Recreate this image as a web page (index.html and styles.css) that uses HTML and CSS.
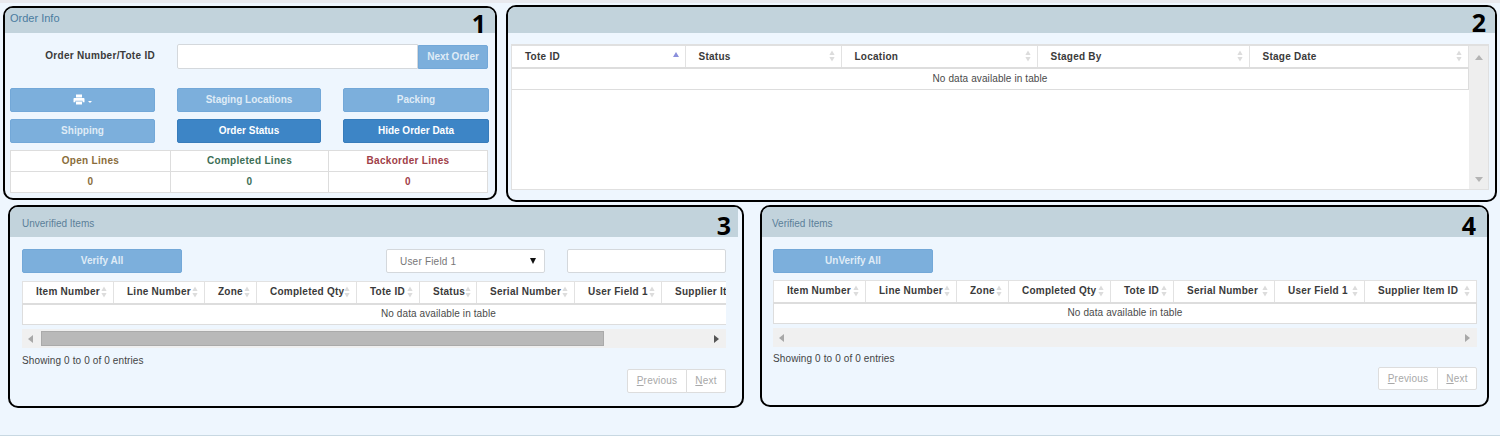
FILE: index.html
```html
<!DOCTYPE html>
<html lang="en">
<head>
    <meta charset="UTF-8">
    <meta name="viewport" content="width=device-width, initial-scale=1.0">
    <title>Order Info</title>
    <link rel="stylesheet" href="styles.css">
</head>
<body>
    <svg class="defs" width="0" height="0">
        <symbol id="sort" viewBox="0 0 6 12"><path d="M3 0.5 L5.6 5 H0.4 Z M3 11.5 L0.4 7 H5.6 Z"/></symbol>
    </svg>

    <div class="row row-top">
        <!-- Order Info -->
        <section class="panel panel-order">
            <span class="mark">1</span>
            <h2 class="panel-title title-large">Order Info</h2>
            <div class="order-body">
                <div class="order-form">
                    <label class="order-label" for="orderNumber">Order Number/Tote ID</label>
                    <input class="order-input" type="text" id="orderNumber">
                    <button class="btn btn-next" type="button">Next Order</button>
                </div>
                <div class="order-buttons">
                    <button class="btn" type="button">
                        <svg class="print-icon" viewBox="0 0 12 11" width="12" height="11"><path fill="#fff" d="M3 0.5 H9 V3.4 H3 Z M1.2 4 H10.8 Q11.5 4 11.5 5 V8.2 H9.6 V6.8 H2.4 V8.2 H0.5 V5 Q0.5 4 1.2 4 Z M3 7.5 H9 V10.5 H3 Z"/></svg>
                        <span class="caret"></span>
                    </button>
                    <button class="btn" type="button">Staging Locations</button>
                    <button class="btn" type="button">Packing</button>
                    <button class="btn" type="button">Shipping</button>
                    <button class="btn btn-active" type="button">Order Status</button>
                    <button class="btn btn-active" type="button">Hide Order Data</button>
                </div>
                <table class="stats">
                    <tr>
                        <th class="stat-open">Open Lines</th>
                        <th class="stat-done">Completed Lines</th>
                        <th class="stat-back">Backorder Lines</th>
                    </tr>
                    <tr>
                        <td class="stat-open">0</td>
                        <td class="stat-done">0</td>
                        <td class="stat-back">0</td>
                    </tr>
                </table>
            </div>
        </section>

        <!-- Tote table -->
        <section class="panel panel-totes">
            <span class="mark">2</span>
            <h2 class="panel-title title-large"></h2>
            <div class="totes-body">
                <div class="totes-box">
                    <div class="totes-main">
                        <table class="grid grid-totes">
                            <thead>
                                <tr>
                                    <th><div class="th-in">Tote ID <svg class="sort-up" viewBox="0 0 6 5" width="6" height="5"><path d="M3 0 L6 5 H0 Z"/></svg></div></th>
                                    <th><div class="th-in">Status <svg class="sort"><use href="#sort"/></svg></div></th>
                                    <th><div class="th-in">Location <svg class="sort"><use href="#sort"/></svg></div></th>
                                    <th><div class="th-in">Staged By <svg class="sort"><use href="#sort"/></svg></div></th>
                                    <th><div class="th-in">Stage Date <svg class="sort"><use href="#sort"/></svg></div></th>
                                </tr>
                            </thead>
                            <tbody>
                                <tr><td colspan="5">No data available in table</td></tr>
                            </tbody>
                        </table>
                    </div>
                    <div class="vscroll">
                        <span class="arrow arrow-up"></span>
                        <span class="arrow arrow-down"></span>
                    </div>
                </div>
            </div>
        </section>
    </div>

    <div class="row row-bottom">
        <!-- Unverified Items -->
        <section class="panel panel-unverified">
            <span class="mark">3</span>
            <h2 class="panel-title">Unverified Items</h2>
            <div class="items-body">
                <div class="toolbar">
                    <button class="btn btn-wide" type="button">Verify All</button>
                    <div class="select"><span>User Field 1</span><span class="select-arrow"></span></div>
                    <input class="search" type="text">
                </div>
                <div class="grid-wrap">
                    <table class="grid grid-unverified">
                        <thead>
                            <tr>
                                <th><div class="th-in">Item Number <svg class="sort"><use href="#sort"/></svg></div></th>
                                <th><div class="th-in">Line Number <svg class="sort"><use href="#sort"/></svg></div></th>
                                <th><div class="th-in">Zone <svg class="sort"><use href="#sort"/></svg></div></th>
                                <th><div class="th-in">Completed Qty <svg class="sort"><use href="#sort"/></svg></div></th>
                                <th><div class="th-in">Tote ID <svg class="sort"><use href="#sort"/></svg></div></th>
                                <th><div class="th-in">Status <svg class="sort"><use href="#sort"/></svg></div></th>
                                <th><div class="th-in">Serial Number <svg class="sort"><use href="#sort"/></svg></div></th>
                                <th><div class="th-in">User Field 1 <svg class="sort"><use href="#sort"/></svg></div></th>
                                <th><div class="th-in">Supplier Item ID <svg class="sort"><use href="#sort"/></svg></div></th>
                            </tr>
                        </thead>
                        <tbody>
                            <tr><td class="no-data-clip" colspan="9"><span>No data available in table</span></td></tr>
                        </tbody>
                    </table>
                </div>
                <div class="hscroll">
                    <span class="arrow arrow-left"></span>
                    <div class="hscroll-track"><div class="hscroll-thumb"></div></div>
                    <span class="arrow arrow-right arrow-dark"></span>
                </div>
                <div class="info">Showing 0 to 0 of 0 entries</div>
                <div class="pager">
                    <a class="page-btn page-prev"><u>P</u>revious</a>
                    <a class="page-btn page-next"><u>N</u>ext</a>
                </div>
            </div>
        </section>

        <!-- Verified Items -->
        <section class="panel panel-verified">
            <span class="mark">4</span>
            <h2 class="panel-title">Verified Items</h2>
            <div class="items-body">
                <div class="toolbar">
                    <button class="btn btn-wide" type="button">UnVerify All</button>
                </div>
                <div class="grid-wrap">
                    <table class="grid grid-verified">
                        <thead>
                            <tr>
                                <th><div class="th-in">Item Number <svg class="sort"><use href="#sort"/></svg></div></th>
                                <th><div class="th-in">Line Number <svg class="sort"><use href="#sort"/></svg></div></th>
                                <th><div class="th-in">Zone <svg class="sort"><use href="#sort"/></svg></div></th>
                                <th><div class="th-in">Completed Qty <svg class="sort"><use href="#sort"/></svg></div></th>
                                <th><div class="th-in">Tote ID <svg class="sort"><use href="#sort"/></svg></div></th>
                                <th><div class="th-in">Serial Number <svg class="sort"><use href="#sort"/></svg></div></th>
                                <th><div class="th-in">User Field 1 <svg class="sort"><use href="#sort"/></svg></div></th>
                                <th><div class="th-in">Supplier Item ID <svg class="sort"><use href="#sort"/></svg></div></th>
                            </tr>
                        </thead>
                        <tbody>
                            <tr><td colspan="8">No data available in table</td></tr>
                        </tbody>
                    </table>
                </div>
                <div class="hscroll">
                    <span class="arrow arrow-left"></span>
                    <div class="hscroll-track"></div>
                    <span class="arrow arrow-right"></span>
                </div>
                <div class="info">Showing 0 to 0 of 0 entries</div>
                <div class="pager">
                    <a class="page-btn page-prev"><u>P</u>revious</a>
                    <a class="page-btn page-next"><u>N</u>ext</a>
                </div>
            </div>
        </section>
    </div>
</body>
</html>
```

FILE: styles.css
```css
* {
    box-sizing: border-box;
}
html, body {
    height: 436px;
    overflow: hidden;
}
body {
    margin: 0;
    font-family: "Liberation Sans", Arial, sans-serif;
    font-size: 10px;
    color: #444;
    background-color: #eef6fe;
    border-top: 3px solid #e8e9ee;
    border-bottom: 1px solid #c8d8e2;
}
.defs {
    display: none;
}
.row {
    display: flex;
}
.row-top {
    padding: 2px 0 0 3px;
    gap: 9px;
    height: 199px;
}
.row-bottom {
    padding: 3px 0 0 8px;
    gap: 16px;
}

/* panels */
.panel {
    position: relative;
    border: 2px solid #000;
    border-radius: 10px;
    overflow: hidden;
}
.panel-order {
    width: 494px;
    height: 194px;
    margin-top: 1px;
}
.panel-totes {
    width: 991px;
    height: 197px;
}
.panel-unverified {
    width: 736px;
    height: 203px;
}
.panel-verified {
    width: 729px;
    height: 202px;
}
.panel-title {
    margin: 0;
    height: 30px;
    padding: 11px 0 0 12px;
    font-size: 10px;
    font-weight: normal;
    line-height: 12px;
    color: #5b7f99;
    background-color: #c2d3dc;
}
.title-large {
    height: 26px;
    padding: 3px 0 0 5px;
    font-size: 11px;
    line-height: 14px;
    color: #4b7c9f;
}
.panel-order .title-large {
    height: 25px;
}
.panel-unverified .panel-title {
    margin-right: 4px;
}
.panel-verified .panel-title {
    padding-left: 10px;
}
.mark {
    position: absolute;
    top: -1px;
    right: 9px;
    font-family: "Open Sans", sans-serif;
    font-size: 25px;
    font-weight: bold;
    line-height: 32px;
    color: #000;
}
.panel-unverified .mark {
    top: 2px;
    right: 11px;
}
.panel-verified .mark {
    top: 2px;
    right: 11px;
}

/* buttons */
.btn {
    display: flex;
    align-items: center;
    justify-content: center;
    gap: 3px;
    height: 24px;
    padding: 0 0 2px;
    font-family: inherit;
    font-size: 10px;
    font-weight: bold;
    color: #dfebf6;
    background-color: #7cafdc;
    border: 1px solid #73a8d8;
    border-radius: 2px;
}
.order-form .btn, .order-buttons .btn {
    padding-bottom: 1px;
}
.btn-active {
    color: #fff;
    background-color: #3d85c6;
    border-color: #377cbb;
}
.btn-next {
    width: 70px;
    margin-top: 1px;
    border-radius: 0 2px 2px 0;
}
.btn-wide {
    width: 160px;
}
.caret {
    width: 0;
    height: 0;
    margin-top: 4px;
    border-top: 2px solid #fff;
    border-left: 2px solid transparent;
    border-right: 2px solid transparent;
}

/* order info */
.order-body {
    padding: 11px 0 0 5px;
}
.order-form {
    display: flex;
    height: 25px;
}
.order-label {
    width: 145px;
    margin-right: 22px;
    font-size: 10px;
    font-weight: bold;
    letter-spacing: 0.3px;
    line-height: 24px;
    text-align: right;
    color: #3a3a3a;
}
.order-input {
    width: 241px;
    height: 25px;
    background-color: #fff;
    border: 1px solid #d4d8dc;
    border-radius: 2px 0 0 2px;
}
.order-buttons {
    display: grid;
    grid-template-columns: 145px 144px 146px;
    gap: 7px 22px;
    margin-top: 19px;
}
.stats {
    width: 478px;
    height: 42px;
    margin-top: 7px;
    table-layout: fixed;
    border-collapse: collapse;
    background-color: #fff;
}
.stats th, .stats td {
    height: 21px;
    padding: 0 0 2px;
    border: 1px solid #ddd;
    font-size: 10px;
    font-weight: bold;
    letter-spacing: 0.3px;
    text-align: center;
}
.stats th:nth-child(1) {
    width: 160px;
}
.stats th:nth-child(2) {
    width: 158px;
}
.stat-open {
    color: #8a6d3b;
}
.stat-done {
    color: #3c6e55;
}
.stat-back {
    color: #9f4048;
}

/* data tables */
.grid {
    table-layout: fixed;
    border-collapse: collapse;
    background-color: #fff;
}
.grid th {
    height: 22px;
    padding: 0 6px 1px 13px;
    font-size: 10px;
    font-weight: bold;
    letter-spacing: 0.25px;
    color: #3a3a3a;
    text-align: left;
    white-space: nowrap;
    border: 1px solid #e2e2e2;
    border-bottom: 2px solid #ddd;
}
.grid td {
    height: 21px;
    padding: 0 0 1px;
    font-size: 10px;
    letter-spacing: 0.1px;
    color: #4a4a4a;
    text-align: center;
    border: 1px solid #ddd;
}
.th-in {
    display: flex;
    align-items: center;
    justify-content: space-between;
}
.sort {
    flex: none;
    width: 6px;
    height: 12px;
    fill: #dcdcdc;
}
.sort-up {
    flex: none;
    fill: #8a8fdc;
    margin-bottom: 4px;
}

.totes-body {
    padding: 11px 0 0 3px;
}
.totes-box {
    display: flex;
    width: 978px;
    height: 146px;
    border: 1px solid #e0e0e0;
    border-top-width: 2px;
    background-color: #fff;
}
.totes-main {
    width: 957px;
}
.grid-totes {
    width: 957px;
}
.grid-totes th {
    border-top: 0;
    border-left: 0;
}
.grid-totes td {
    border-left: 0;
}
.grid-totes th:nth-child(1) {
    width: 173px;
}
.grid-totes th:nth-child(2) {
    width: 156px;
}
.grid-totes th:nth-child(3) {
    width: 196px;
}
.grid-totes th:nth-child(4) {
    width: 212px;
}
.vscroll {
    display: flex;
    flex-direction: column;
    justify-content: space-between;
    align-items: center;
    width: 20px;
    padding: 9px 0 7px;
    background-color: #eee;
}

.items-body {
    padding: 12px 0 0 12px;
    width: 716px;
}
.panel-verified .items-body {
    padding-left: 11px;
    width: 715px;
}
.toolbar {
    display: flex;
    height: 24px;
}
.select {
    display: flex;
    align-items: center;
    justify-content: space-between;
    width: 159px;
    height: 24px;
    margin-left: auto;
    padding: 0 8px 0 13px;
    font-size: 10px;
    letter-spacing: 0.2px;
    color: #777;
    background-color: #fff;
    border: 1px solid #d4d8dc;
    border-radius: 2px;
}
.select-arrow {
    width: 0;
    height: 0;
    border-top: 6px solid #111;
    border-left: 3.5px solid transparent;
    border-right: 3.5px solid transparent;
}
.search {
    width: 159px;
    height: 24px;
    margin-left: 22px;
    background-color: #fff;
    border: 1px solid #d4d8dc;
    border-radius: 2px;
}
.grid-wrap {
    width: 704px;
    margin-top: 8px;
    overflow: hidden;
}
.panel-verified .grid-wrap {
    margin-top: 7px;
}
.grid-unverified {
    width: 743px;
}
.grid-verified {
    width: 704px;
}
.grid-unverified th:nth-child(1) { width: 91px; }
.grid-unverified th:nth-child(2) { width: 91px; }
.grid-unverified th:nth-child(3) { width: 52px; }
.grid-unverified th:nth-child(4) { width: 100px; }
.grid-unverified th:nth-child(5) { width: 63px; }
.grid-unverified th:nth-child(6) { width: 57px; }
.grid-unverified th:nth-child(7) { width: 98px; }
.grid-unverified th:nth-child(8) { width: 87px; }
.grid-verified th:nth-child(1) { width: 92px; }
.grid-verified th:nth-child(2) { width: 91px; }
.grid-verified th:nth-child(3) { width: 52px; }
.grid-verified th:nth-child(4) { width: 102px; }
.grid-verified th:nth-child(5) { width: 63px; }
.grid-verified th:nth-child(6) { width: 101px; }
.grid-verified th:nth-child(7) { width: 90px; }
.grid .no-data-clip {
    text-align: left;
    padding-left: 358px;
}

/* scrollbars */
.hscroll {
    display: flex;
    align-items: center;
    width: 704px;
    height: 19px;
    margin-top: 4px;
    background-color: #f0f0f0;
}
.hscroll .arrow-left {
    margin: 0 8px 0 6px;
}
.hscroll .arrow-right {
    margin: 0 7px 0 6px;
}
.hscroll-track {
    flex: 1;
    height: 15px;
}
.hscroll-thumb {
    width: 563px;
    height: 15px;
    background-color: #b9b9b9;
    border: 1px solid #aaa;
}
.arrow {
    width: 0;
    height: 0;
    flex: none;
}
.arrow-up {
    border-bottom: 5px solid #b4b4b4;
    border-left: 4px solid transparent;
    border-right: 4px solid transparent;
}
.arrow-down {
    border-top: 5px solid #b4b4b4;
    border-left: 4px solid transparent;
    border-right: 4px solid transparent;
}
.arrow-left {
    border-right: 5px solid #a8a8a8;
    border-top: 4px solid transparent;
    border-bottom: 4px solid transparent;
}
.arrow-right {
    border-left: 5px solid #a8a8a8;
    border-top: 4px solid transparent;
    border-bottom: 4px solid transparent;
}
.arrow-dark {
    border-left-color: #555;
}

/* footer of the tables */
.info {
    margin-top: 5px;
    font-size: 10px;
    letter-spacing: 0.12px;
    line-height: 14px;
    color: #444;
}
.panel-unverified .info {
    margin-top: 6px;
}
.pager {
    display: flex;
    justify-content: flex-end;
    margin-top: 1px;
}
.page-btn {
    display: flex;
    align-items: center;
    justify-content: center;
    height: 24px;
    padding-bottom: 1px;
    font-size: 10px;
    letter-spacing: 0.2px;
    color: #a8a8a8;
    background-color: #fff;
    border: 1px solid #ddd;
}
.panel-verified .page-btn {
    height: 23px;
}
.page-prev {
    width: 60px;
    border-radius: 2px 0 0 2px;
}
.page-next {
    width: 40px;
    margin-left: -1px;
    border-radius: 0 2px 2px 0;
}
```
